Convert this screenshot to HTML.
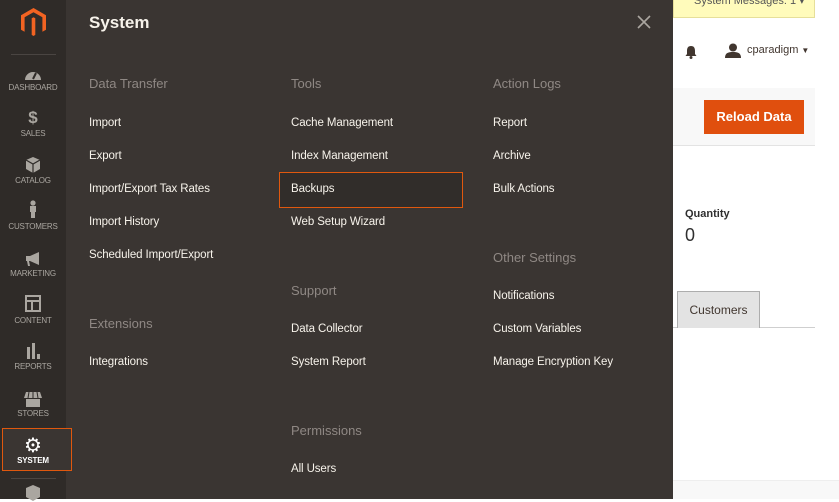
<!DOCTYPE html>
<html><head><style>
*{margin:0;padding:0;box-sizing:border-box}
body{width:839px;height:499px;overflow:hidden;background:#fff;font-family:"Liberation Sans",sans-serif;position:relative}
.a{position:absolute;white-space:nowrap}
#side{left:0;top:0;width:66px;height:499px;background:#2f2b28}
#panel{left:66px;top:0;width:607px;height:499px;background:#3a3532}
.lbl{position:absolute;width:66px;left:0;text-align:center;font-size:8px;color:#aaa6a0;letter-spacing:-.2px}
.ic{position:absolute;left:23px;width:20px;height:18px}
.h{font-size:13px;color:#8f8884}
.i{font-size:11.5px;color:#f7f3eb;letter-spacing:-.1px}
</style></head><body>
<div class="a" id="side"></div>
<div class="a" id="panel"></div>
<svg class="a" style="left:21px;top:8px" width="25" height="29" viewBox="0 0 25 29"><path d="M12.5 0L0 7.2v14.5l3.6 2.1V9.3l8.9-5.1 8.9 5.1v14.5l3.6-2.1V7.2z" fill="#f26322"/><path d="M10.7 10.3v16.6l1.8 1.1 1.8-1.1V10.3L12.5 9.3z" fill="#f26322"/></svg>
<div class="a" style="left:11px;top:54px;width:45px;height:1px;background:#4a4542"></div>
<svg class="ic" style="top:66px" viewBox="0 0 20 18"><path d="M2 14a8 8 0 0 1 16 0z" fill="#aaa6a0"/><path d="M10 13l3-6" stroke="#2f2b28" stroke-width="2"/></svg>
<div class="lbl" style="top:83px">DASHBOARD</div>
<div class="a" style="left:0;width:66px;text-align:center;top:108px;font-size:17px;font-weight:bold;color:#aaa6a0">$</div>
<div class="lbl" style="top:129px">SALES</div>
<svg class="ic" style="top:156px" viewBox="0 0 20 18"><path d="M10 1l7 3v9l-7 4-7-4V4z" fill="#aaa6a0"/><path d="M3 4l7 4 7-4M10 8v9" stroke="#2f2b28" stroke-width="1.2" fill="none"/></svg>
<div class="lbl" style="top:176px">CATALOG</div>
<svg class="ic" style="top:200px" viewBox="0 0 20 18"><circle cx="10" cy="3" r="2.6" fill="#aaa6a0"/><path d="M7 6h6v6h-1v6h-4v-6H7z" fill="#aaa6a0"/></svg>
<div class="lbl" style="top:222px">CUSTOMERS</div>
<svg class="ic" style="top:250px" viewBox="0 0 20 18"><path d="M3 6h4l9-4v13l-9-4H6l1 5H5l-1-5H3z" fill="#aaa6a0"/></svg>
<div class="lbl" style="top:269px">MARKETING</div>
<svg class="ic" style="top:295px" viewBox="0 0 20 18"><rect x="3" y="1" width="14" height="15" fill="none" stroke="#aaa6a0" stroke-width="2"/><path d="M3 6h14M9 6v10" stroke="#aaa6a0" stroke-width="2"/></svg>
<div class="lbl" style="top:316px">CONTENT</div>
<svg class="ic" style="top:342px" viewBox="0 0 20 18"><rect x="4" y="5" width="3" height="12" fill="#aaa6a0"/><rect x="9" y="1" width="3" height="16" fill="#aaa6a0"/><rect x="14" y="12" width="3" height="5" fill="#aaa6a0"/></svg>
<div class="lbl" style="top:362px">REPORTS</div>
<svg class="ic" style="top:390px" viewBox="0 0 20 18"><path d="M3 2h14l2 6H1z" fill="#aaa6a0"/><path d="M3 9h14v8H3z" fill="#aaa6a0"/><path d="M6 2l-1 6M10 2v6M14 2l1 6" stroke="#2f2b28"/></svg>
<div class="lbl" style="top:409px">STORES</div>
<div class="a" style="left:2px;top:428px;width:70px;height:43px;border:1.5px solid #e0580e;background:#3a3532"></div>
<div class="a" style="left:22px;top:433px;font-size:20px;color:#fff;width:22px;text-align:center">⚙</div>
<div class="lbl" style="top:456px;color:#fff;font-weight:bold">SYSTEM</div>
<div class="a" style="left:11px;top:478px;width:45px;height:1px;background:#4a4542"></div>
<svg class="ic" style="top:484px" viewBox="0 0 20 18"><path d="M10 1l7 3v9l-7 4-7-4V4z" fill="#aaa6a0"/></svg>

<div class="a" style="left:89px;top:13px;font-size:17px;font-weight:bold;color:#f7f3eb">System</div>
<svg class="a" style="left:637px;top:15px" width="14" height="14" viewBox="0 0 14 14"><path d="M1 1l12 12M13 1L1 13" stroke="#aaa6a0" stroke-width="1.6"/></svg>
<div class="a" style="left:279px;top:172px;width:184px;height:36px;border:1.5px solid #e0580e;background:#312d2a"></div>

<div class="a h" style="left:89px;top:76px">Data Transfer</div>
<div class="a i" style="left:89px;top:117px">Import</div>
<div class="a i" style="left:89px;top:150px">Export</div>
<div class="a i" style="left:89px;top:183px">Import/Export Tax Rates</div>
<div class="a i" style="left:89px;top:216px">Import History</div>
<div class="a i" style="left:89px;top:249px">Scheduled Import/Export</div>
<div class="a h" style="left:89px;top:316px">Extensions</div>
<div class="a i" style="left:89px;top:356px">Integrations</div>

<div class="a h" style="left:291px;top:76px">Tools</div>
<div class="a i" style="left:291px;top:117px">Cache Management</div>
<div class="a i" style="left:291px;top:150px">Index Management</div>
<div class="a i" style="left:291px;top:183px">Backups</div>
<div class="a i" style="left:291px;top:216px">Web Setup Wizard</div>
<div class="a h" style="left:291px;top:283px">Support</div>
<div class="a i" style="left:291px;top:323px">Data Collector</div>
<div class="a i" style="left:291px;top:356px">System Report</div>
<div class="a h" style="left:291px;top:423px">Permissions</div>
<div class="a i" style="left:291px;top:463px">All Users</div>

<div class="a h" style="left:493px;top:76px">Action Logs</div>
<div class="a i" style="left:493px;top:117px">Report</div>
<div class="a i" style="left:493px;top:150px">Archive</div>
<div class="a i" style="left:493px;top:183px">Bulk Actions</div>
<div class="a h" style="left:493px;top:250px">Other Settings</div>
<div class="a i" style="left:493px;top:290px">Notifications</div>
<div class="a i" style="left:493px;top:323px">Custom Variables</div>
<div class="a i" style="left:493px;top:356px">Manage Encryption Key</div>

<div class="a" style="left:673px;top:0;width:142px;height:18px;background:#fffbbb;border:1px solid #e6df9a;border-top:none;font-size:11px;color:#555;padding-left:20px;line-height:2px;overflow:hidden">System Messages: 1 ▾</div>
<svg class="a" style="left:685px;top:45px" width="12" height="14" viewBox="0 0 12 14"><path d="M6 1c3 0 4 2 4 5v3l1.5 2H.5L2 9V6c0-3 1-5 4-5z" fill="#41362f"/><circle cx="6" cy="12.5" r="1.5" fill="#41362f"/></svg>
<svg class="a" style="left:725px;top:43px" width="16" height="15" viewBox="0 0 16 15"><circle cx="8" cy="4.5" r="4" fill="#41362f"/><path d="M0 15c0-5 3-6 8-6s8 1 8 6z" fill="#41362f"/></svg>
<div class="a" style="left:747px;top:44px;font-size:11px;color:#41362f">cparadigm <span style="font-size:8px">▼</span></div>
<div class="a" style="left:673px;top:88px;width:142px;height:58px;background:#f8f8f8;border-bottom:1px solid #e3e3e3"></div>
<div class="a" style="left:704px;top:100px;width:100px;height:34px;background:#e04f0e;color:#fff;font-size:13px;font-weight:bold;text-align:center;line-height:34px">Reload Data</div>
<div class="a" style="left:685px;top:208px;font-size:11px;font-weight:bold;color:#303030">Quantity</div>
<div class="a" style="left:685px;top:225px;font-size:18px;color:#303030">0</div>
<div class="a" style="left:673px;top:327px;width:142px;height:1px;background:#cfcfcf"></div>
<div class="a" style="left:677px;top:291px;width:83px;height:37px;background:#e3e3e3;border:1px solid #adadad;border-bottom:none;font-size:12px;color:#41362f;text-align:center;line-height:37px">Customers</div>
<div class="a" style="left:673px;top:480px;width:166px;height:19px;background:#f8f8f8;border-top:1px solid #eee"></div>
</body></html>
